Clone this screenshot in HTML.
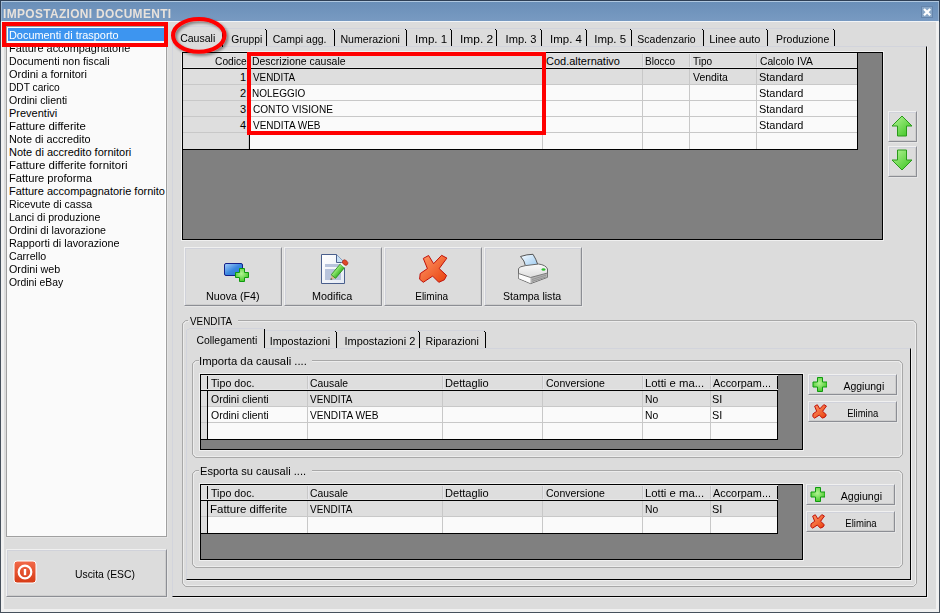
<!DOCTYPE html>
<html><head><meta charset="utf-8"><style>
*{box-sizing:border-box;margin:0;padding:0}
html,body{width:940px;height:613px;overflow:hidden;background:#dcdcdc}
body{position:relative;font-family:"Liberation Sans",sans-serif;font-size:11px;color:#000}
.a{position:absolute}
.t{position:absolute;white-space:nowrap;line-height:13px;height:13px}
svg{position:absolute}
</style></head><body>
<div class="a" style="left:0px;top:0px;width:940px;height:613px;border:1px solid #46505c"></div>
<div class="a" style="left:0px;top:0px;width:940px;height:22px;border:1px solid #2e3f55;border-bottom:none"></div>
<div class="a" style="left:1px;top:22px;width:938px;height:590px;border:3px solid #f0f0f0;border-top:none"></div>
<div class="a" style="left:1px;top:1px;width:938px;height:1px;background:#b0c8e0"></div>
<div class="a" style="left:2px;top:2px;width:936px;height:19px;background:linear-gradient(#6a8fb8,#789ac2)"></div>
<div class="a" style="left:1px;top:2px;width:1px;height:19px;background:#9ab4d0"></div>
<div class="a" style="left:938px;top:2px;width:1px;height:19px;background:#9ab4d0"></div>
<div class="a" style="left:1px;top:21px;width:938px;height:1px;background:#f2f5f8"></div>
<div class="t" style="left:3px;top:8px;font-weight:bold;font-size:12px;letter-spacing:0.35px;color:#e8e2dc;margin-left:0.01px;transform:scaleX(0.9940);transform-origin:0 0;">IMPOSTAZIONI DOCUMENTI</div>
<svg style="left:921px;top:6px" width="12" height="12" viewBox="0 0 12 12"><rect x="0.5" y="0.5" width="11" height="11" fill="#88a6c6" stroke="#6585ac"/><path d="M3 3 L9.2 9.2 M9.2 3 L3 9.2" stroke="#fff" stroke-width="2.3"/></svg>
<div class="a" style="left:6px;top:26px;width:161px;height:511px;background:#fafafa;border:1px solid #a0a0a0"></div>
<div class="a" style="left:7px;top:27px;width:159px;height:1px;background:#fff"></div>
<div class="a" style="left:165px;top:27px;width:1px;height:509px;background:#fff"></div>
<div class="a" style="left:167px;top:26px;width:1px;height:512px;background:#e4e4e4"></div>
<div class="a" style="left:6px;top:537px;width:162px;height:1px;background:#e4e4e4"></div>
<div class="a" style="left:8px;top:28px;width:157px;height:13px;background:#3d95f0"></div>
<div class="a" style="left:7px;top:27px;width:158px;height:509px;overflow:hidden">
<div class="t" style="left:2px;top:2px;color:#fff;margin-left:0.01px;transform:scaleX(0.9908);transform-origin:0 0;">Documenti di trasporto</div>
<div class="t" style="left:2px;top:15px;margin-left:0.01px;transform:scaleX(0.9917);transform-origin:0 0;">Fatture accompagnatorie</div>
<div class="t" style="left:2px;top:28px;margin-left:0.04px;transform:scaleX(0.9612);transform-origin:0 0;">Documenti non fiscali</div>
<div class="t" style="left:2px;top:41px;margin-left:0.30px;transform:scaleX(0.9962);transform-origin:0 0;">Ordini a fornitori</div>
<div class="t" style="left:2px;top:54px;margin-left:0.07px;transform:scaleX(0.9259);transform-origin:0 0;">DDT carico</div>
<div class="t" style="left:2px;top:67px;margin-left:0.30px;transform:scaleX(0.9617);transform-origin:0 0;">Ordini clienti</div>
<div class="t" style="left:2px;top:80px;margin-left:0.00px;transform:scaleX(1.0000);transform-origin:0 0;">Preventivi</div>
<div class="t" style="left:2px;top:93px;margin-left:-0.04px;transform:scaleX(1.0411);transform-origin:0 0;">Fatture differite</div>
<div class="t" style="left:2px;top:106px;margin-left:0.01px;transform:scaleX(0.9877);transform-origin:0 0;">Note di accredito</div>
<div class="t" style="left:2px;top:119px;margin-left:0.00px;transform:scaleX(1.0000);transform-origin:0 0;">Note di accredito fornitori</div>
<div class="t" style="left:2px;top:132px;margin-left:-0.04px;transform:scaleX(1.0446);transform-origin:0 0;">Fatture differite fornitori</div>
<div class="t" style="left:2px;top:145px;margin-left:-0.01px;transform:scaleX(1.0123);transform-origin:0 0;">Fatture proforma</div>
<div class="t" style="left:2px;top:158px;">Fatture accompagnatorie fornito</div>
<div class="t" style="left:2px;top:171px;margin-left:0.04px;transform:scaleX(0.9647);transform-origin:0 0;">Ricevute di cassa</div>
<div class="t" style="left:2px;top:184px;margin-left:0.04px;transform:scaleX(0.9574);transform-origin:0 0;">Lanci di produzione</div>
<div class="t" style="left:2px;top:197px;margin-left:0.30px;transform:scaleX(0.9670);transform-origin:0 0;">Ordini di lavorazione</div>
<div class="t" style="left:2px;top:210px;margin-left:0.02px;transform:scaleX(0.9820);transform-origin:0 0;">Rapporti di lavorazione</div>
<div class="t" style="left:2px;top:223px;margin-left:0.30px;transform:scaleX(0.9658);transform-origin:0 0;">Carrello</div>
<div class="t" style="left:2px;top:236px;margin-left:0.30px;transform:scaleX(0.9750);transform-origin:0 0;">Ordini web</div>
<div class="t" style="left:2px;top:249px;margin-left:0.30px;transform:scaleX(0.9431);transform-origin:0 0;">Ordini eBay</div>
</div>
<div class="a" style="left:2px;top:22px;width:166px;height:25px;border:4px solid #ff0000"></div>
<div class="a" style="left:6px;top:549px;width:161px;height:48px;background:#dcdcdc;border:1px solid;border-color:#f0f0f0 #8c8e94 #8c8e94 #f0f0f0;box-shadow:inset 1px 1px 0 #d0d2da,inset -1px -1px 0 #cdcdcd,1px 1px 0 #e6e6e6"></div>
<svg style="left:13px;top:560px" width="24" height="24" viewBox="0 0 24 24"><defs><linearGradient id="pw" x1="0" y1="0" x2="0" y2="1"><stop offset="0" stop-color="#f26a4a"/><stop offset="1" stop-color="#d63a14"/></linearGradient></defs><rect x="1" y="1" width="22" height="22" rx="3" fill="url(#pw)" stroke="#fff" stroke-width="1"/><circle cx="12" cy="12" r="6.3" fill="none" stroke="#fff" stroke-width="2.2"/><rect x="10.8" y="9" width="2.4" height="6.2" fill="#fff"/></svg>
<div class="t" style="left:73px;top:568px;margin-left:1.56px;transform:scaleX(0.9435);transform-origin:0 0;">Uscita (ESC)</div>
<div class="a" style="left:172px;top:46px;width:756px;height:552px;border:1px solid;border-color:transparent #f0f0f0 #f0f0f0 transparent"></div>
<div class="a" style="left:172px;top:46px;width:755px;height:551px;border:1px solid;border-color:#d2d4dc #000 #000 #d2d4dc"></div>
<div class="a" style="left:223px;top:28px;width:611px;height:1px;background:#d2d4dc"></div>
<div class="a" style="left:266px;top:30px;width:1px;height:16px;background:#000"></div>
<div class="a" style="left:265px;top:29px;width:1px;height:1px;background:#000"></div>
<div class="t" style="left:146.5px;top:33px;width:200px;text-align:center;margin-left:6.22px;transform:scaleX(0.9375);transform-origin:0 0;">Gruppi</div>
<div class="a" style="left:334px;top:30px;width:1px;height:16px;background:#000"></div>
<div class="a" style="left:333px;top:29px;width:1px;height:1px;background:#000"></div>
<div class="t" style="left:200.5px;top:33px;width:200px;text-align:center;margin-left:3.76px;transform:scaleX(0.9564);transform-origin:0 0;">Campi agg.</div>
<div class="a" style="left:406px;top:30px;width:1px;height:16px;background:#000"></div>
<div class="a" style="left:405px;top:29px;width:1px;height:1px;background:#000"></div>
<div class="t" style="left:270.5px;top:33px;width:200px;text-align:center;margin-left:3.10px;transform:scaleX(0.9617);transform-origin:0 0;">Numerazioni</div>
<div class="a" style="left:451px;top:30px;width:1px;height:16px;background:#000"></div>
<div class="a" style="left:450px;top:29px;width:1px;height:1px;background:#000"></div>
<div class="t" style="left:331.5px;top:33px;width:200px;text-align:center;margin-left:-5.42px;transform:scaleX(1.0517);transform-origin:0 0;">Imp. 1</div>
<div class="a" style="left:496px;top:30px;width:1px;height:16px;background:#000"></div>
<div class="a" style="left:495px;top:29px;width:1px;height:1px;background:#000"></div>
<div class="t" style="left:376.5px;top:33px;width:200px;text-align:center;margin-left:-8.87px;transform:scaleX(1.0862);transform-origin:0 0;">Imp. 2</div>
<div class="a" style="left:541px;top:30px;width:1px;height:16px;background:#000"></div>
<div class="a" style="left:540px;top:29px;width:1px;height:1px;background:#000"></div>
<div class="t" style="left:421.5px;top:33px;width:200px;text-align:center;margin-left:-1.66px;transform:scaleX(1.0100);transform-origin:0 0;">Imp. 3</div>
<div class="a" style="left:586px;top:30px;width:1px;height:16px;background:#000"></div>
<div class="a" style="left:585px;top:29px;width:1px;height:1px;background:#000"></div>
<div class="t" style="left:466.5px;top:33px;width:200px;text-align:center;margin-left:-4.62px;transform:scaleX(1.0400);transform-origin:0 0;">Imp. 4</div>
<div class="a" style="left:631px;top:30px;width:1px;height:16px;background:#000"></div>
<div class="a" style="left:630px;top:29px;width:1px;height:1px;background:#000"></div>
<div class="t" style="left:511px;top:33px;width:200px;text-align:center;margin-left:-4.86px;transform:scaleX(1.0414);transform-origin:0 0;">Imp. 5</div>
<div class="a" style="left:703px;top:30px;width:1px;height:16px;background:#000"></div>
<div class="a" style="left:702px;top:29px;width:1px;height:1px;background:#000"></div>
<div class="t" style="left:567.5px;top:33px;width:200px;text-align:center;margin-left:3.77px;transform:scaleX(0.9550);transform-origin:0 0;">Scadenzario</div>
<div class="a" style="left:767px;top:30px;width:1px;height:16px;background:#000"></div>
<div class="a" style="left:766px;top:29px;width:1px;height:1px;background:#000"></div>
<div class="t" style="left:635.5px;top:33px;width:200px;text-align:center;margin-left:-0.45px;transform:scaleX(0.9980);transform-origin:0 0;">Linee auto</div>
<div class="a" style="left:834px;top:30px;width:1px;height:16px;background:#000"></div>
<div class="a" style="left:833px;top:29px;width:1px;height:1px;background:#000"></div>
<div class="t" style="left:703px;top:33px;width:200px;text-align:center;margin-left:3.59px;transform:scaleX(0.9564);transform-origin:0 0;">Produzione</div>
<div class="a" style="left:173px;top:27px;width:49px;height:20px;background:#dcdcdc"></div>
<div class="a" style="left:175px;top:26px;width:46px;height:1px;background:#d2d4dc"></div>
<div class="a" style="left:172px;top:28px;width:1px;height:18px;background:#d2d4dc"></div>
<div class="a" style="left:173px;top:27px;width:2px;height:1px;background:#d2d4dc"></div>
<div class="a" style="left:222px;top:30px;width:1px;height:17px;background:#000"></div>
<div class="t" style="left:97.5px;top:32px;width:200px;text-align:center;margin-left:4.24px;transform:scaleX(0.9571);transform-origin:0 0;">Causali</div>
<div class="a" style="left:181px;top:51px;width:703px;height:190px;border:1px solid #f0f0f0"></div>
<div class="a" style="left:182px;top:52px;width:701px;height:188px;background:#808080;border:1px solid #000"></div>
<div class="a" style="left:183px;top:53px;width:674px;height:15px;background:#dedede"></div>
<div class="a" style="left:183px;top:69px;width:66px;height:15px;background:#dedede"></div>
<div class="a" style="left:249px;top:69px;width:608px;height:15px;background:#dedede"></div>
<div class="a" style="left:183px;top:84px;width:674px;height:1px;background:#c8c8c8"></div>
<div class="a" style="left:183px;top:85px;width:66px;height:15px;background:#dedede"></div>
<div class="a" style="left:249px;top:85px;width:608px;height:15px;background:#fafafa"></div>
<div class="a" style="left:183px;top:100px;width:674px;height:1px;background:#c8c8c8"></div>
<div class="a" style="left:183px;top:101px;width:66px;height:15px;background:#dedede"></div>
<div class="a" style="left:249px;top:101px;width:608px;height:15px;background:#fafafa"></div>
<div class="a" style="left:183px;top:116px;width:674px;height:1px;background:#c8c8c8"></div>
<div class="a" style="left:183px;top:117px;width:66px;height:15px;background:#dedede"></div>
<div class="a" style="left:249px;top:117px;width:608px;height:15px;background:#fafafa"></div>
<div class="a" style="left:183px;top:132px;width:674px;height:1px;background:#c8c8c8"></div>
<div class="a" style="left:183px;top:133px;width:66px;height:16px;background:#dedede"></div>
<div class="a" style="left:249px;top:133px;width:608px;height:16px;background:#fafafa"></div>
<div class="a" style="left:857px;top:53px;width:1px;height:96px;background:#000"></div>
<div class="a" style="left:183px;top:149px;width:675px;height:1px;background:#000"></div>
<div class="a" style="left:248px;top:53px;width:1px;height:96px;background:#c8c8c8"></div>
<div class="a" style="left:542px;top:53px;width:1px;height:96px;background:#c8c8c8"></div>
<div class="a" style="left:642px;top:53px;width:1px;height:96px;background:#c8c8c8"></div>
<div class="a" style="left:689px;top:53px;width:1px;height:96px;background:#c8c8c8"></div>
<div class="a" style="left:756px;top:53px;width:1px;height:96px;background:#c8c8c8"></div>
<div class="a" style="left:183px;top:53px;width:674px;height:1px;background:#e6e6e6"></div>
<div class="a" style="left:183px;top:67px;width:674px;height:1px;background:#e6e6e6"></div>
<div class="a" style="left:249px;top:53px;width:1px;height:15px;background:#e6e6ea"></div>
<div class="a" style="left:543px;top:53px;width:1px;height:15px;background:#e6e6ea"></div>
<div class="a" style="left:643px;top:53px;width:1px;height:15px;background:#e6e6ea"></div>
<div class="a" style="left:690px;top:53px;width:1px;height:15px;background:#e6e6ea"></div>
<div class="a" style="left:757px;top:53px;width:1px;height:15px;background:#e6e6ea"></div>
<div class="a" style="left:183px;top:68px;width:674px;height:1px;background:#000"></div>
<div class="a" style="left:249px;top:133px;width:1px;height:16px;background:#000"></div>
<div class="t" style="left:46px;top:55px;width:200px;text-align:right;margin-left:15.69px;transform:scaleX(0.9235);transform-origin:0 0;">Codice</div>
<div class="t" style="left:252px;top:55px;margin-left:-0.15px;transform:scaleX(0.9505);transform-origin:0 0;">Descrizione causale</div>
<div class="t" style="left:545px;top:55px;margin-left:1.00px;transform:scaleX(1.0000);transform-origin:0 0;">Cod.alternativo</div>
<div class="t" style="left:645px;top:55px;margin-left:-0.11px;transform:scaleX(0.9125);transform-origin:0 0;">Blocco</div>
<div class="t" style="left:692px;top:55px;margin-left:1.00px;transform:scaleX(0.9143);transform-origin:0 0;">Tipo</div>
<div class="t" style="left:759px;top:55px;margin-left:0.80px;transform:scaleX(0.9333);transform-origin:0 0;">Calcolo IVA</div>
<div class="t" style="left:46px;top:71px;width:200px;text-align:right;">1</div>
<div class="t" style="left:252px;top:71px;margin-left:0.80px;transform:scaleX(0.8979);transform-origin:0 0;">VENDITA</div>
<div class="t" style="left:692px;top:71px;margin-left:1.00px;transform:scaleX(0.9514);transform-origin:0 0;">Vendita</div>
<div class="t" style="left:759px;top:71px;margin-left:-0.20px;transform:scaleX(0.9953);transform-origin:0 0;">Standard</div>
<div class="t" style="left:46px;top:87px;width:200px;text-align:right;">2</div>
<div class="t" style="left:252px;top:87px;margin-left:-0.11px;transform:scaleX(0.9070);transform-origin:0 0;">NOLEGGIO</div>
<div class="t" style="left:759px;top:87px;margin-left:-0.20px;transform:scaleX(0.9953);transform-origin:0 0;">Standard</div>
<div class="t" style="left:46px;top:103px;width:200px;text-align:right;">3</div>
<div class="t" style="left:252px;top:103px;margin-left:0.80px;transform:scaleX(0.9161);transform-origin:0 0;">CONTO VISIONE</div>
<div class="t" style="left:759px;top:103px;margin-left:-0.20px;transform:scaleX(0.9953);transform-origin:0 0;">Standard</div>
<div class="t" style="left:46px;top:119px;width:200px;text-align:right;">4</div>
<div class="t" style="left:252px;top:119px;margin-left:0.80px;transform:scaleX(0.9081);transform-origin:0 0;">VENDITA WEB</div>
<div class="t" style="left:759px;top:119px;margin-left:-0.20px;transform:scaleX(0.9953);transform-origin:0 0;">Standard</div>
<div class="a" style="left:247px;top:52px;width:299px;height:83px;border:4px solid #ff0000"></div>
<div class="a" style="left:888px;top:111px;width:29px;height:31px;background:#dcdcdc;border:1px solid;border-color:#f0f0f0 #8c8e94 #8c8e94 #f0f0f0;box-shadow:inset 1px 1px 0 #d0d2da,inset -1px -1px 0 #cdcdcd,1px 1px 0 #e6e6e6"></div>
<div class="a" style="left:888px;top:146px;width:29px;height:31px;background:#dcdcdc;border:1px solid;border-color:#f0f0f0 #8c8e94 #8c8e94 #f0f0f0;box-shadow:inset 1px 1px 0 #d0d2da,inset -1px -1px 0 #cdcdcd,1px 1px 0 #e6e6e6"></div>
<svg style="left:889px;top:113px" width="26" height="26" viewBox="0 0 26 26"><defs><linearGradient id="ga" x1="0" y1="0" x2="1" y2="1"><stop offset="0" stop-color="#b8f598"/><stop offset="1" stop-color="#36c21c"/></linearGradient></defs><path d="M13 3 L23 13 L17.5 13 L17.5 23 L8.5 23 L8.5 13 L3 13 Z" fill="url(#ga)" stroke="#2a9a1a" stroke-width="1"/></svg>
<svg style="left:889px;top:147px" width="26" height="26" viewBox="0 0 26 26"><path d="M13 23 L23 13 L17.5 13 L17.5 3 L8.5 3 L8.5 13 L3 13 Z" fill="url(#ga)" stroke="#2a9a1a" stroke-width="1"/></svg>
<div class="a" style="left:184px;top:247px;width:98px;height:59px;background:#dcdcdc;border:1px solid;border-color:#f0f0f0 #8c8e94 #8c8e94 #f0f0f0;box-shadow:inset 1px 1px 0 #d0d2da,inset -1px -1px 0 #cdcdcd,1px 1px 0 #e6e6e6"></div>
<div class="t" style="left:184px;top:290px;width:98px;text-align:center;margin-left:0.53px;transform:scaleX(0.9759);transform-origin:0 0;">Nuova (F4)</div>
<div class="a" style="left:284px;top:247px;width:98px;height:59px;background:#dcdcdc;border:1px solid;border-color:#f0f0f0 #8c8e94 #8c8e94 #f0f0f0;box-shadow:inset 1px 1px 0 #d0d2da,inset -1px -1px 0 #cdcdcd,1px 1px 0 #e6e6e6"></div>
<div class="t" style="left:284px;top:290px;width:98px;text-align:center;margin-left:-0.49px;transform:scaleX(0.9825);transform-origin:0 0;">Modifica</div>
<div class="a" style="left:384px;top:247px;width:98px;height:59px;background:#dcdcdc;border:1px solid;border-color:#f0f0f0 #8c8e94 #8c8e94 #f0f0f0;box-shadow:inset 1px 1px 0 #d0d2da,inset -1px -1px 0 #cdcdcd,1px 1px 0 #e6e6e6"></div>
<div class="t" style="left:384px;top:290px;width:98px;text-align:center;margin-left:3.23px;transform:scaleX(0.9114);transform-origin:0 0;">Elimina</div>
<div class="a" style="left:484px;top:247px;width:98px;height:59px;background:#dcdcdc;border:1px solid;border-color:#f0f0f0 #8c8e94 #8c8e94 #f0f0f0;box-shadow:inset 1px 1px 0 #d0d2da,inset -1px -1px 0 #cdcdcd,1px 1px 0 #e6e6e6"></div>
<div class="t" style="left:484px;top:290px;width:98px;text-align:center;margin-left:1.13px;transform:scaleX(0.9617);transform-origin:0 0;">Stampa lista</div>
<svg width="0" height="0" style="left:0;top:0"><defs><linearGradient id="xg" x1="0" y1="0" x2="1" y2="1"><stop offset="0" stop-color="#ff9a6a"/><stop offset="1" stop-color="#e8400c"/></linearGradient><radialGradient id="pg" cx="0.45" cy="0.4" r="0.6"><stop offset="0" stop-color="#b4f494"/><stop offset="1" stop-color="#48c82c"/></radialGradient><linearGradient id="bl" x1="0" y1="0" x2="1" y2="1"><stop offset="0" stop-color="#a8d0fa"/><stop offset="0.5" stop-color="#3a88e0"/><stop offset="1" stop-color="#2a70d0"/></linearGradient><linearGradient id="pap" x1="0" y1="0" x2="1" y2="1"><stop offset="0" stop-color="#f8fcff"/><stop offset="1" stop-color="#98c8f0"/></linearGradient><linearGradient id="ptop" x1="0" y1="0" x2="0" y2="1"><stop offset="0" stop-color="#fafafa"/><stop offset="1" stop-color="#d0d0d0"/></linearGradient><linearGradient id="doc" x1="0" y1="0" x2="1" y2="1"><stop offset="0" stop-color="#ffffff"/><stop offset="1" stop-color="#e4eaf4"/></linearGradient><linearGradient id="pen" x1="0" y1="0" x2="0" y2="1"><stop offset="0" stop-color="#9ef07c"/><stop offset="1" stop-color="#3cb828"/></linearGradient></defs></svg>
<svg style="left:222px;top:261px" width="28" height="22" viewBox="0 0 28 22"><rect x="2.5" y="2.5" width="18" height="12" rx="1.5" fill="url(#bl)" stroke="#14208a"/><path d="M17.5 7.5 h5 v4 h4 v5 h-4 v4 h-5 v-4 h-4 v-5 h4 z" fill="url(#pg)" stroke="#0e9a0e"/></svg>
<svg style="left:318px;top:253px" width="32" height="33" viewBox="0 0 32 33"><path d="M3.5 1.5 H18.5 L26.5 9.5 V30.5 H3.5 Z" fill="url(#doc)" stroke="#4a5f8c"/><path d="M18.5 1.5 V9.5 H26.5" fill="#c8e0f4" stroke="#4a5f8c"/><rect x="7" y="11" width="16" height="3" fill="#b8c4dc"/><rect x="7" y="16" width="16" height="11" fill="#b8c4dc"/><g transform="translate(12.5 27) rotate(-50)"><path d="M0 0 L4.5 -2.6 V2.6 Z" fill="#d8b890"/><path d="M0 0 L1.8 -1 V1 Z" fill="#404040"/><rect x="4.5" y="-2.8" width="14" height="5.6" fill="url(#pen)" stroke="#2a8a1a" stroke-width="0.8"/><rect x="18.5" y="-2.8" width="2" height="5.6" fill="#f4f4f4"/><rect x="20.5" y="-3" width="4.5" height="6" rx="2.5" fill="#e04828" stroke="#a02010" stroke-width="0.6"/></g></svg>
<svg style="left:418px;top:254px" width="30" height="30" viewBox="0 0 30 30"><path d="M5.3 4.4 L10.6 1.5 L15.6 9.7 L23.6 1.3 L28.9 4.1 L21.2 14.6 L28.6 21.5 L26.4 25.8 L20.8 28.3 L14.6 22.1 L5.3 28.3 L1.6 25.2 L2.2 19.6 L9.4 14.6 Z" fill="url(#xg)" stroke="#c01008" stroke-width="1"/></svg>
<svg style="left:516px;top:252px" width="34" height="34" viewBox="0 0 34 34"><path d="M4.5 4.5 Q11 2.3 17 2.3 Q20 7 21.7 12.3 L9.9 15.3 Q8.5 8 4.5 4.5 Z" fill="url(#pap)" stroke="#555"/><path d="M2.5 16.5 Q3.5 14.5 9.5 13.6 L22.5 12 Q30 13 31.5 17 V25.3 L14.6 31.6 L2.5 26.5 Z" fill="url(#ptop)" stroke="#6a6a6a"/><path d="M2.8 21.8 L14.6 25.6 V31.2 L2.8 26.3 Z" fill="#fbfbfb"/><path d="M14.6 25.6 L31.2 21.2 V25.1 L14.6 31.2 Z" fill="#b4b4b4"/><path d="M16 27.5 L30 23.2 M16 29.3 L30 25" stroke="#888" stroke-width="0.7"/><path d="M2.5 21.5 L14.6 25.5 L31.5 21" fill="none" stroke="#7a7a7a"/><ellipse cx="27.5" cy="17.5" rx="2" ry="1.3" fill="#30c030"/></svg>
<svg style="left:182px;top:320px" width="737" height="268" viewBox="0 0 737 268"><path d="M7 1.5 H4.5 L1.5 4.5 V262.5 L4.5 265.5 H731.5 L733.5 263.5 V4.5 L731.5 2.5" fill="none" stroke="#ececec"/><path d="M6 0.5 H3.5 L0.5 3.5 V263.5 L3.5 266.5 H731.5 L734.5 263.5 V3.5 L731.5 0.5 H56" fill="none" stroke="#a8a8a8"/><path d="M56 1.5 H731" fill="none" stroke="#ececec"/></svg>
<div class="t" style="left:190px;top:315px;margin-left:0.30px;transform:scaleX(0.8979);transform-origin:0 0;">VENDITA</div>
<div class="a" style="left:186px;top:348px;width:726px;height:233px;border:1px solid;border-color:transparent #f0f0f0 #f0f0f0 transparent"></div>
<div class="a" style="left:186px;top:348px;width:725px;height:232px;border:1px solid;border-color:#d2d4dc #000 #000 #d2d4dc"></div>
<div class="a" style="left:265px;top:330px;width:220px;height:1px;background:#d2d4dc"></div>
<div class="a" style="left:336px;top:332px;width:1px;height:16px;background:#000"></div>
<div class="a" style="left:335px;top:331px;width:1px;height:1px;background:#000"></div>
<div class="t" style="left:199.5px;top:335px;width:200px;text-align:center;margin-left:2.08px;transform:scaleX(0.9787);transform-origin:0 0;">Impostazioni</div>
<div class="a" style="left:419px;top:332px;width:1px;height:16px;background:#000"></div>
<div class="a" style="left:418px;top:331px;width:1px;height:1px;background:#000"></div>
<div class="t" style="left:280.5px;top:335px;width:200px;text-align:center;margin-left:-0.21px;transform:scaleX(0.9986);transform-origin:0 0;">Impostazioni 2</div>
<div class="a" style="left:485px;top:332px;width:1px;height:16px;background:#000"></div>
<div class="a" style="left:484px;top:331px;width:1px;height:1px;background:#000"></div>
<div class="t" style="left:352.5px;top:335px;width:200px;text-align:center;margin-left:2.58px;transform:scaleX(0.9717);transform-origin:0 0;">Riparazioni</div>
<div class="a" style="left:187px;top:329px;width:77px;height:20px;background:#dcdcdc"></div>
<div class="a" style="left:189px;top:328px;width:74px;height:1px;background:#d2d4dc"></div>
<div class="a" style="left:186px;top:330px;width:1px;height:18px;background:#d2d4dc"></div>
<div class="a" style="left:187px;top:329px;width:2px;height:1px;background:#d2d4dc"></div>
<div class="a" style="left:264px;top:329px;width:1px;height:19px;background:#000"></div>
<div class="t" style="left:127px;top:334px;width:200px;text-align:center;margin-left:5.11px;transform:scaleX(0.9484);transform-origin:0 0;">Collegamenti</div>
<svg style="left:192px;top:360px" width="712" height="99" viewBox="0 0 712 99"><path d="M7 1.5 H4.5 L1.5 4.5 V93.5 L4.5 96.5 H706.5 L709.5 93.5 V4.5 L706.5 1.5 H120" fill="none" stroke="#ececec"/><path d="M7 0.5 H3.5 L0.5 3.5 V94.5 L3.5 97.5 H707.5 L710.5 94.5 V3.5 L707.5 0.5 H120" fill="none" stroke="#a8a8a8"/></svg>
<div class="t" style="left:200px;top:355px;margin-left:-0.63px;transform:scaleX(1.0252);transform-origin:0 0;">Importa da causali ....</div>
<svg style="left:192px;top:470px" width="712" height="99" viewBox="0 0 712 99"><path d="M7 1.5 H4.5 L1.5 4.5 V93.5 L4.5 96.5 H706.5 L709.5 93.5 V4.5 L706.5 1.5 H120" fill="none" stroke="#ececec"/><path d="M7 0.5 H3.5 L0.5 3.5 V94.5 L3.5 97.5 H707.5 L710.5 94.5 V3.5 L707.5 0.5 H120" fill="none" stroke="#a8a8a8"/></svg>
<div class="t" style="left:200px;top:465px;margin-left:-0.51px;transform:scaleX(1.0087);transform-origin:0 0;">Esporta su causali ....</div>
<div class="a" style="left:199px;top:373px;width:605px;height:78px;border:1px solid #f0f0f0"></div>
<div class="a" style="left:200px;top:374px;width:603px;height:76px;background:#808080;border:1px solid #000"></div>
<div class="a" style="left:201px;top:375px;width:577px;height:15px;background:#dedede"></div>
<div class="a" style="left:201px;top:391px;width:6px;height:15px;background:#dedede"></div>
<div class="a" style="left:208px;top:391px;width:570px;height:15px;background:#dedede"></div>
<div class="a" style="left:201px;top:406px;width:577px;height:1px;background:#c8c8c8"></div>
<div class="a" style="left:201px;top:407px;width:6px;height:15px;background:#dedede"></div>
<div class="a" style="left:208px;top:407px;width:570px;height:15px;background:#fafafa"></div>
<div class="a" style="left:201px;top:422px;width:577px;height:1px;background:#c8c8c8"></div>
<div class="a" style="left:201px;top:423px;width:6px;height:16px;background:#dedede"></div>
<div class="a" style="left:208px;top:423px;width:570px;height:16px;background:#fafafa"></div>
<div class="a" style="left:207px;top:375px;width:1px;height:64px;background:#000"></div>
<div class="a" style="left:777px;top:375px;width:1px;height:64px;background:#000"></div>
<div class="a" style="left:201px;top:439px;width:577px;height:1px;background:#000"></div>
<div class="a" style="left:307px;top:375px;width:1px;height:64px;background:#c8c8c8"></div>
<div class="a" style="left:442px;top:375px;width:1px;height:64px;background:#c8c8c8"></div>
<div class="a" style="left:542px;top:375px;width:1px;height:64px;background:#c8c8c8"></div>
<div class="a" style="left:642px;top:375px;width:1px;height:64px;background:#c8c8c8"></div>
<div class="a" style="left:710px;top:375px;width:1px;height:64px;background:#c8c8c8"></div>
<div class="a" style="left:201px;top:375px;width:577px;height:1px;background:#e6e6e6"></div>
<div class="a" style="left:201px;top:389px;width:577px;height:1px;background:#e6e6e6"></div>
<div class="a" style="left:308px;top:375px;width:1px;height:15px;background:#e6e6ea"></div>
<div class="a" style="left:443px;top:375px;width:1px;height:15px;background:#e6e6ea"></div>
<div class="a" style="left:543px;top:375px;width:1px;height:15px;background:#e6e6ea"></div>
<div class="a" style="left:643px;top:375px;width:1px;height:15px;background:#e6e6ea"></div>
<div class="a" style="left:711px;top:375px;width:1px;height:15px;background:#e6e6ea"></div>
<div class="a" style="left:201px;top:390px;width:577px;height:1px;background:#000"></div>
<div class="t" style="left:210px;top:377px;margin-left:0.80px;transform:scaleX(0.9682);transform-origin:0 0;">Tipo doc.</div>
<div class="t" style="left:310px;top:377px;margin-left:0.40px;transform:scaleX(0.9400);transform-origin:0 0;">Causale</div>
<div class="t" style="left:445px;top:377px;margin-left:-0.31px;transform:scaleX(1.0071);transform-origin:0 0;">Dettaglio</div>
<div class="t" style="left:545px;top:377px;margin-left:0.90px;transform:scaleX(0.9548);transform-origin:0 0;">Conversione</div>
<div class="t" style="left:645px;top:377px;margin-left:-0.33px;transform:scaleX(1.0286);transform-origin:0 0;">Lotti e ma...</div>
<div class="t" style="left:713px;top:377px;margin-left:0.00px;transform:scaleX(0.9879);transform-origin:0 0;">Accorpam...</div>
<div class="t" style="left:210px;top:393px;margin-left:0.80px;transform:scaleX(0.9533);transform-origin:0 0;">Ordini clienti</div>
<div class="t" style="left:310px;top:393px;margin-left:0.40px;transform:scaleX(0.9064);transform-origin:0 0;">VENDITA</div>
<div class="t" style="left:645px;top:393px;margin-left:-0.24px;transform:scaleX(0.9385);transform-origin:0 0;">No</div>
<div class="t" style="left:713px;top:393px;margin-left:-0.99px;transform:scaleX(0.9889);transform-origin:0 0;">SI</div>
<div class="t" style="left:210px;top:409px;margin-left:0.80px;transform:scaleX(0.9533);transform-origin:0 0;">Ordini clienti</div>
<div class="t" style="left:310px;top:409px;margin-left:0.40px;transform:scaleX(0.9216);transform-origin:0 0;">VENDITA WEB</div>
<div class="t" style="left:645px;top:409px;margin-left:-0.24px;transform:scaleX(0.9385);transform-origin:0 0;">No</div>
<div class="t" style="left:713px;top:409px;margin-left:-0.99px;transform:scaleX(0.9889);transform-origin:0 0;">SI</div>
<div class="a" style="left:199px;top:483px;width:605px;height:78px;border:1px solid #f0f0f0"></div>
<div class="a" style="left:200px;top:484px;width:603px;height:76px;background:#808080;border:1px solid #000"></div>
<div class="a" style="left:201px;top:485px;width:577px;height:15px;background:#dedede"></div>
<div class="a" style="left:201px;top:501px;width:6px;height:15px;background:#dedede"></div>
<div class="a" style="left:208px;top:501px;width:570px;height:15px;background:#dedede"></div>
<div class="a" style="left:201px;top:516px;width:577px;height:1px;background:#c8c8c8"></div>
<div class="a" style="left:201px;top:517px;width:6px;height:16px;background:#dedede"></div>
<div class="a" style="left:208px;top:517px;width:570px;height:16px;background:#fafafa"></div>
<div class="a" style="left:207px;top:485px;width:1px;height:48px;background:#000"></div>
<div class="a" style="left:777px;top:485px;width:1px;height:48px;background:#000"></div>
<div class="a" style="left:201px;top:533px;width:577px;height:1px;background:#000"></div>
<div class="a" style="left:307px;top:485px;width:1px;height:48px;background:#c8c8c8"></div>
<div class="a" style="left:442px;top:485px;width:1px;height:48px;background:#c8c8c8"></div>
<div class="a" style="left:542px;top:485px;width:1px;height:48px;background:#c8c8c8"></div>
<div class="a" style="left:642px;top:485px;width:1px;height:48px;background:#c8c8c8"></div>
<div class="a" style="left:710px;top:485px;width:1px;height:48px;background:#c8c8c8"></div>
<div class="a" style="left:201px;top:485px;width:577px;height:1px;background:#e6e6e6"></div>
<div class="a" style="left:201px;top:499px;width:577px;height:1px;background:#e6e6e6"></div>
<div class="a" style="left:308px;top:485px;width:1px;height:15px;background:#e6e6ea"></div>
<div class="a" style="left:443px;top:485px;width:1px;height:15px;background:#e6e6ea"></div>
<div class="a" style="left:543px;top:485px;width:1px;height:15px;background:#e6e6ea"></div>
<div class="a" style="left:643px;top:485px;width:1px;height:15px;background:#e6e6ea"></div>
<div class="a" style="left:711px;top:485px;width:1px;height:15px;background:#e6e6ea"></div>
<div class="a" style="left:201px;top:500px;width:577px;height:1px;background:#000"></div>
<div class="t" style="left:210px;top:487px;margin-left:0.80px;transform:scaleX(0.9682);transform-origin:0 0;">Tipo doc.</div>
<div class="t" style="left:310px;top:487px;margin-left:0.40px;transform:scaleX(0.9400);transform-origin:0 0;">Causale</div>
<div class="t" style="left:445px;top:487px;margin-left:-0.31px;transform:scaleX(1.0071);transform-origin:0 0;">Dettaglio</div>
<div class="t" style="left:545px;top:487px;margin-left:0.90px;transform:scaleX(0.9548);transform-origin:0 0;">Conversione</div>
<div class="t" style="left:645px;top:487px;margin-left:-0.33px;transform:scaleX(1.0286);transform-origin:0 0;">Lotti e ma...</div>
<div class="t" style="left:713px;top:487px;margin-left:0.00px;transform:scaleX(0.9879);transform-origin:0 0;">Accorpam...</div>
<div class="t" style="left:210px;top:503px;margin-left:-0.15px;transform:scaleX(1.0452);transform-origin:0 0;">Fatture differite</div>
<div class="t" style="left:310px;top:503px;margin-left:0.40px;transform:scaleX(0.9064);transform-origin:0 0;">VENDITA</div>
<div class="t" style="left:645px;top:503px;margin-left:-0.24px;transform:scaleX(0.9385);transform-origin:0 0;">No</div>
<div class="t" style="left:713px;top:503px;margin-left:-0.99px;transform:scaleX(0.9889);transform-origin:0 0;">SI</div>
<div class="a" style="left:808px;top:374px;width:89px;height:21px;background:#dcdcdc;border:1px solid;border-color:#f0f0f0 #8c8e94 #8c8e94 #f0f0f0;box-shadow:inset 1px 1px 0 #d0d2da,inset -1px -1px 0 #cdcdcd,1px 1px 0 #e6e6e6"></div>
<svg style="left:811px;top:376px" width="16" height="16" viewBox="0 0 16 16"><path d="M7.5 1.5 h5 v4.5 h4.5 v5 h-4.5 v4.5 h-5 v-4.5 h-4.5 v-5 h4.5 z" transform="translate(-1 0)" fill="url(#pg)" stroke="#0e9a0e"/></svg>
<div class="t" style="left:828px;top:380px;width:69px;text-align:center;margin-left:2.62px;transform:scaleX(0.9524);transform-origin:0 0;">Aggiungi</div>
<div class="a" style="left:808px;top:401px;width:89px;height:21px;background:#dcdcdc;border:1px solid;border-color:#f0f0f0 #8c8e94 #8c8e94 #f0f0f0;box-shadow:inset 1px 1px 0 #d0d2da,inset -1px -1px 0 #cdcdcd,1px 1px 0 #e6e6e6"></div>
<svg style="left:812px;top:404px" width="15" height="15" viewBox="0 0 30 30"><path d="M5.3 4.4 L10.6 1.5 L15.6 9.7 L23.6 1.3 L28.9 4.1 L21.2 14.6 L28.6 21.5 L26.4 25.8 L20.8 28.3 L14.6 22.1 L5.3 28.3 L1.6 25.2 L2.2 19.6 L9.4 14.6 Z" fill="url(#xg)" stroke="#c01008" stroke-width="2"/></svg>
<div class="t" style="left:828px;top:407px;width:69px;text-align:center;margin-left:5.36px;transform:scaleX(0.8611);transform-origin:0 0;">Elimina</div>
<div class="a" style="left:806px;top:484px;width:89px;height:21px;background:#dcdcdc;border:1px solid;border-color:#f0f0f0 #8c8e94 #8c8e94 #f0f0f0;box-shadow:inset 1px 1px 0 #d0d2da,inset -1px -1px 0 #cdcdcd,1px 1px 0 #e6e6e6"></div>
<svg style="left:809px;top:486px" width="16" height="16" viewBox="0 0 16 16"><path d="M7.5 1.5 h5 v4.5 h4.5 v5 h-4.5 v4.5 h-5 v-4.5 h-4.5 v-5 h4.5 z" transform="translate(-1 0)" fill="url(#pg)" stroke="#0e9a0e"/></svg>
<div class="t" style="left:826px;top:490px;width:69px;text-align:center;margin-left:2.43px;transform:scaleX(0.9667);transform-origin:0 0;">Aggiungi</div>
<div class="a" style="left:806px;top:511px;width:89px;height:21px;background:#dcdcdc;border:1px solid;border-color:#f0f0f0 #8c8e94 #8c8e94 #f0f0f0;box-shadow:inset 1px 1px 0 #d0d2da,inset -1px -1px 0 #cdcdcd,1px 1px 0 #e6e6e6"></div>
<svg style="left:810px;top:514px" width="15" height="15" viewBox="0 0 30 30"><path d="M5.3 4.4 L10.6 1.5 L15.6 9.7 L23.6 1.3 L28.9 4.1 L21.2 14.6 L28.6 21.5 L26.4 25.8 L20.8 28.3 L14.6 22.1 L5.3 28.3 L1.6 25.2 L2.2 19.6 L9.4 14.6 Z" fill="url(#xg)" stroke="#c01008" stroke-width="2"/></svg>
<div class="t" style="left:826px;top:517px;width:69px;text-align:center;margin-left:4.62px;transform:scaleX(0.8694);transform-origin:0 0;">Elimina</div>
<svg style="left:168px;top:14px" width="64" height="44" viewBox="0 0 64 44"><defs><filter id="sh" x="-20%" y="-20%" width="140%" height="140%"><feGaussianBlur in="SourceAlpha" stdDeviation="1.5"/><feOffset dx="1.5" dy="1.5"/><feComponentTransfer><feFuncA type="linear" slope="0.45"/></feComponentTransfer><feMerge><feMergeNode/><feMergeNode in="SourceGraphic"/></feMerge></filter></defs><ellipse filter="url(#sh)" cx="30.75" cy="21.4" rx="25.7" ry="16.4" fill="none" stroke="#ff0000" stroke-width="4.1"/></svg>
</body></html>
